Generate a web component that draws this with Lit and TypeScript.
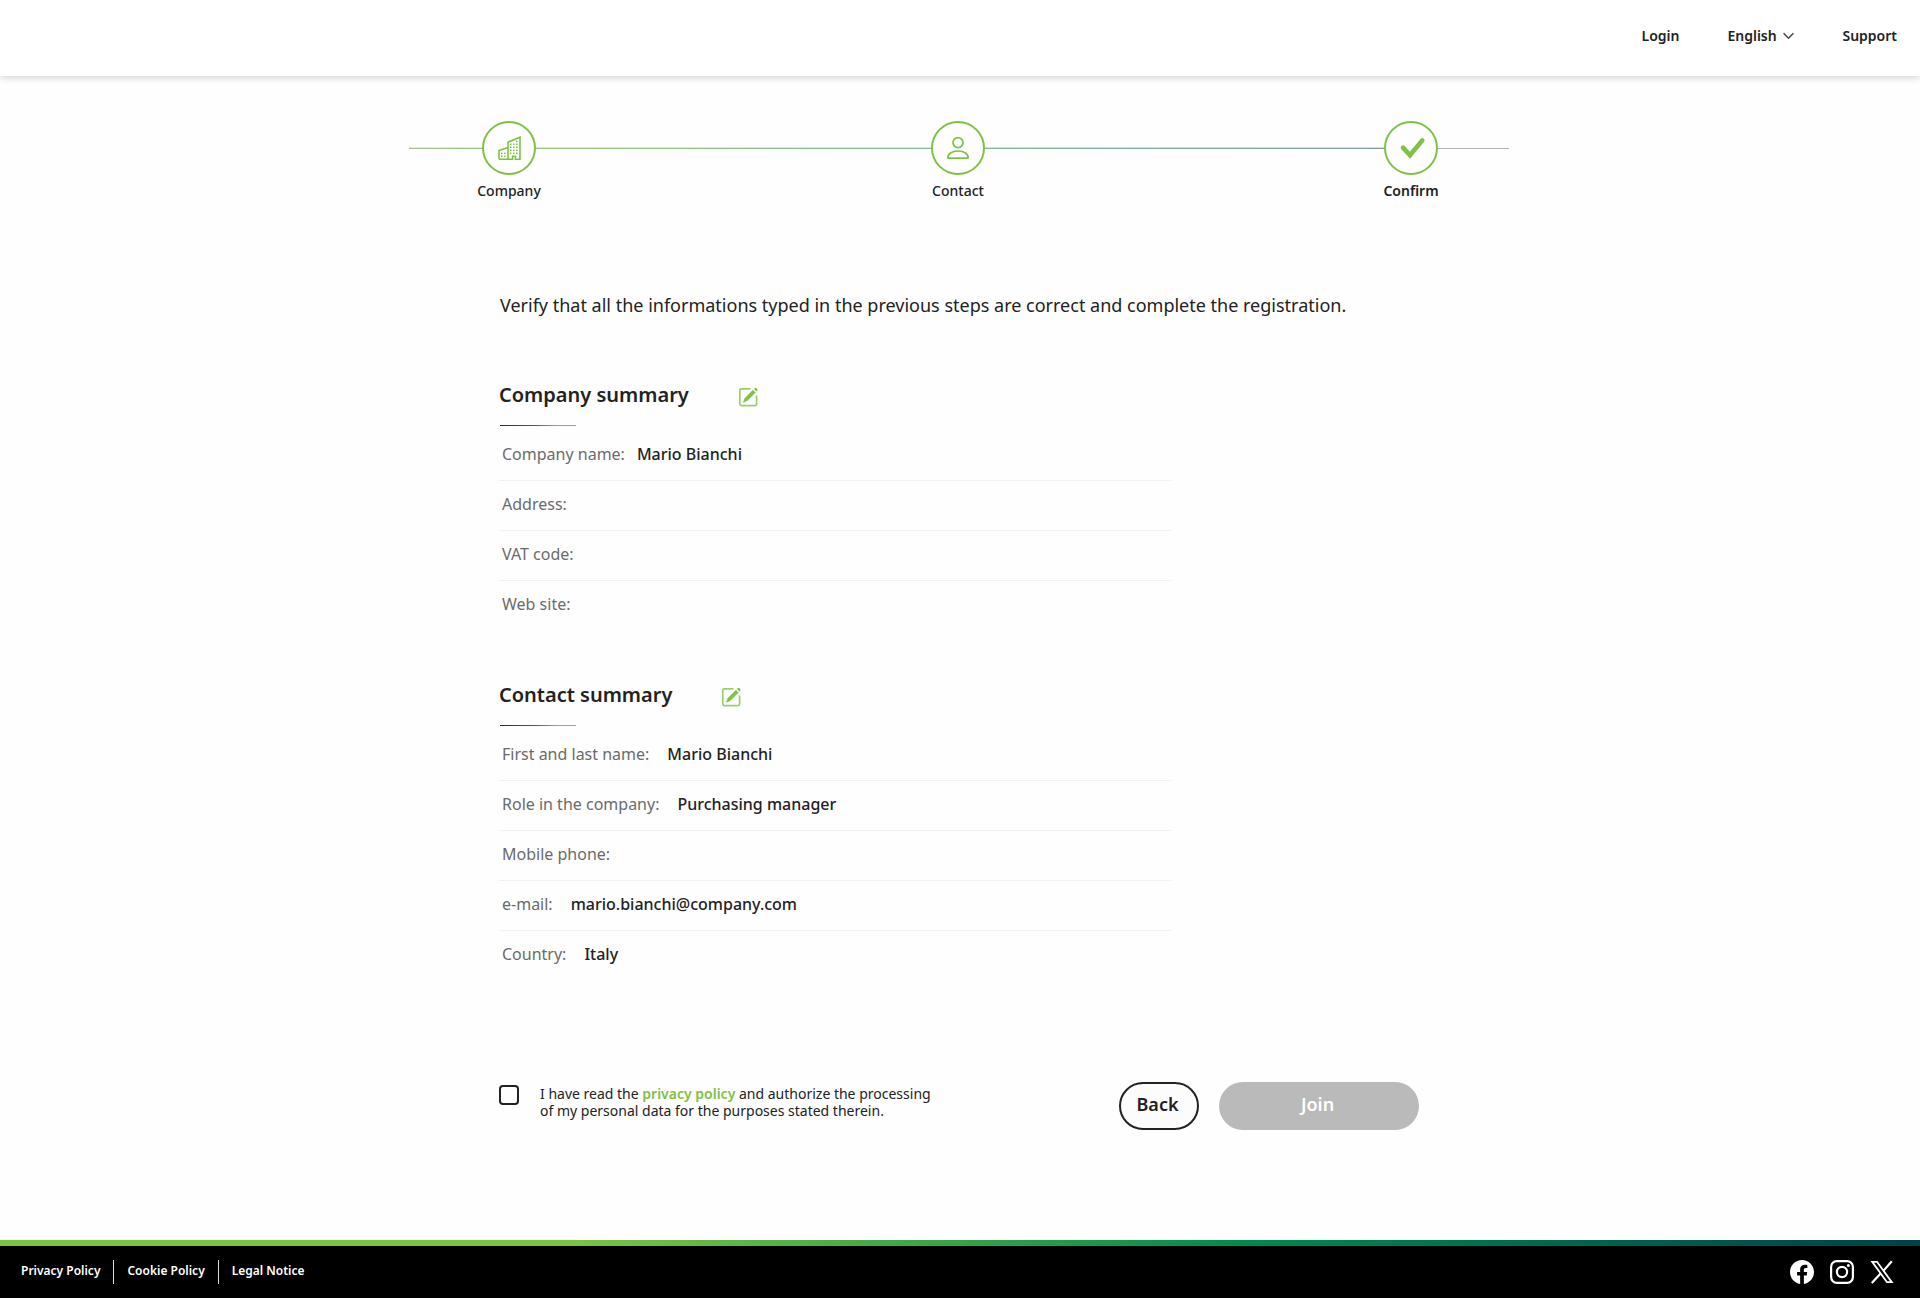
import { LitElement, html, css, svg, nothing } from "lit";
import { customElement, property, state } from "lit/decorators.js";

interface Field {
  label: string;
  value?: string;
}

const companyFields: Field[] = [
  { label: "Company name:", value: "Mario Bianchi" },
  { label: "Address:" },
  { label: "VAT code:" },
  { label: "Web site:" },
];

const contactFields: Field[] = [
  { label: "First and last name:", value: "Mario Bianchi" },
  { label: "Role in the company:", value: "Purchasing manager" },
  { label: "Mobile phone:" },
  { label: "e-mail:", value: "mario.bianchi@company.com" },
  { label: "Country:", value: "Italy" },
];

const windows = [
  [4, 16], [7, 16], [4, 19], [7, 19],
  [13, 7], [16, 7], [19, 4], [19, 7],
  [13, 10], [16, 10], [19, 10],
  [13, 13], [16, 13], [19, 13],
  [13, 16], [16, 16], [19, 16],
];

const companyIcon = svg`
  <path d="M2 23.200V14.600L11 11.600M11 23.200V6.200L23 1.200V23.200H18.400V20.200H15.600V23.200H2" fill="none" stroke="currentColor" stroke-width="1.600"/>
  ${windows.map(([x, y]) => svg`<rect x=${x} y=${y + 0.6} width="1.500" height="1.500" fill="currentColor"/>`)}
`;

const contactIcon = svg`
  <circle cx="12" cy="6.600" r="5" fill="none" stroke="currentColor" stroke-width="1.700"/>
  <path d="M1.900 22.200C1.400 17.800 6 15 12 15S22.600 17.800 22.100 22.200Z" fill="none" stroke="currentColor" stroke-width="1.700" stroke-linejoin="round"/>
`;

const confirmIcon = svg`
  <path d="M4 11.600L11 19.200L23.300 4.400" fill="none" stroke="currentColor" stroke-width="4.600" stroke-linecap="round"/>
`;

@customElement("step-progress")
export class StepProgress extends LitElement {
  static styles = css`
    :host { display: block; }
    .steps {
      display: flex;
      align-items: flex-start;
      max-width: 1100px;
      margin: 0 auto;
      padding: 0;
      list-style: none;
    }
    .line { height: 1px; margin-top: 26px; flex-basis: 0; border-top: 1px solid transparent; }
    .line-start { flex-grow: 73; background: linear-gradient(90deg, #a9bd98, #98c47a) padding-box; border-top-color: #e2efd8; }
    .line-first { flex-grow: 395; background: linear-gradient(90deg, #98c47a, #86b89a) padding-box; border-top-color: #d8eada; }
    .line-second { flex-grow: 399; background: linear-gradient(90deg, #86b89a, #809fa3) padding-box; border-top-color: #cfdfdc; }
    .line-end { flex-grow: 71; background: #b0b4b4 padding-box; }
    .step {
      width: 54px;
      display: flex;
      flex-direction: column;
      align-items: center;
      gap: 4px;
    }
    .badge {
      box-sizing: border-box;
      width: 54px;
      height: 54px;
      border: 2px solid #7dc242;
      border-radius: 50%;
      display: flex;
      align-items: center;
      justify-content: center;
      color: #7dc242;
    }
    .icon { width: 24px; height: 24px; overflow: visible; }
    .name { font-size: 14px; line-height: 24px; font-weight: 500; color: #222; }
    .current { font-weight: 600; }
  `;

  render() {
    const step = (name: string, icon: unknown, current = false) => html`
      <li class="step" aria-current=${current ? "step" : nothing}>
        <span class="badge"><svg class="icon" viewBox="0 0 24 24" aria-hidden="true">${icon}</svg></span>
        <span class="name ${current ? "current" : ""}">${name}</span>
      </li>`;
    return html`
      <ol class="steps">
        <li class="line line-start" role="presentation"></li>
        ${step("Company", companyIcon)}
        <li class="line line-first" role="presentation"></li>
        ${step("Contact", contactIcon)}
        <li class="line line-second" role="presentation"></li>
        ${step("Confirm", confirmIcon, true)}
        <li class="line line-end" role="presentation"></li>
      </ol>`;
  }
}

@customElement("summary-section")
export class SummarySection extends LitElement {
  @property() heading = "";
  @property({ attribute: false }) fields: Field[] = [];

  static styles = css`
    :host { display: block; }
    .head { display: flex; align-items: center; gap: 49px; height: 40px; }
    .title { margin: 0; font-size: 20px; line-height: 28px; font-weight: 600; color: #222; }
    .edit {
      display: flex;
      margin-top: 4px;
      padding: 0;
      border: 0;
      background: none;
      color: #7dc242;
      cursor: pointer;
    }
    .pencil { width: 22px; height: 22px; }
    .rule {
      width: 76px;
      height: 1px;
      margin: 10px 0 5px 1px;
      background: linear-gradient(90deg, #003a46, #0b7a4b 45%, #7dc242 75%);
    }
    .fields { max-width: 672px; margin: 0; }
    .row {
      box-sizing: border-box;
      display: flex;
      align-items: center;
      gap: var(--value-gap, 18px);
      height: 50px;
      padding: 0 3px 3px;
      border-bottom: 1px solid #f1f1f1;
      font-size: 16px;
      line-height: 24px;
    }
    .row:last-child { border-bottom-color: transparent; }
    .label { color: #6b6b6b; }
    .value { margin: 0; font-weight: 500; color: #222; }
  `;

  render() {
    return html`
      <section>
        <div class="head">
          <h2 class="title">${this.heading}</h2>
          <button class="edit" type="button" aria-label="Edit">
            <svg class="pencil" viewBox="0 0 22 22" aria-hidden="true">
              <path d="M12.500 2.800H3.400Q1.800 2.800 1.800 4.400V18Q1.800 19.600 3.400 19.600H17Q18.600 19.600 18.600 18V9.400" fill="none" stroke="#98cf6b" stroke-width="1.700"/>
              <path d="M14.900 4.200L17.300 6.600L9.300 14.600L5.400 16.200L7 12.200Z" fill="currentColor" stroke="currentColor" stroke-width=".6" stroke-linejoin="round"/>
              <path d="M16 3.100L17.100 2Q17.700 1.600 18.300 2.100L19.400 3.200Q19.800 3.800 19.400 4.400L18.300 5.500Z" fill="currentColor"/>
            </svg>
          </button>
        </div>
        <div class="rule"></div>
        <dl class="fields">
          ${this.fields.map(
            (f) => html`
              <div class="row">
                <dt class="label">${f.label}</dt>
                <dd class="value">${f.value ?? ""}</dd>
              </div>`
          )}
        </dl>
      </section>`;
  }
}

@customElement("app-root")
export class AppRoot extends LitElement {
  @state() private accepted = false;

  static styles = css`
    :host {
      display: block;
      font-family: "Noto Sans", sans-serif;
      color: #222;
      background: #fefefe;
    }
    .page { min-height: 100vh; display: flex; flex-direction: column; }
    .header {
      box-sizing: border-box;
      height: 76px;
      padding: 0 23px 4px 0;
      display: flex;
      align-items: center;
      justify-content: flex-end;
      gap: 48px;
      background: #fff;
      box-shadow: 0 1px 8px rgba(0, 0, 0, 0.2);
      font-size: 14px;
      line-height: 24px;
      font-weight: 600;
    }
    .nav-link { color: inherit; text-decoration: none; }
    .language { display: flex; align-items: center; gap: 6px; }
    .select {
      appearance: none;
      border: 0;
      padding: 0;
      background: none;
      font: inherit;
      color: inherit;
    }
    .chevron { width: 11px; height: 8px; }
    .main { flex: 1; padding: 45px 25px 0 23px; }
    .content { max-width: 920px; margin: 0 auto; }
    .intro { margin: 88px 0 0 1px; font-size: 18px; line-height: 28px; }
    .company { margin-top: 56px; --value-gap: 12px; }
    .contact { margin-top: 44px; }
    .actions {
      margin-top: 101px;
      display: flex;
      align-items: flex-start;
      gap: 20px;
    }
    .consent { flex: 1; display: flex; align-items: flex-start; gap: 21px; padding-top: 3px; }
    .check {
      appearance: none;
      box-sizing: border-box;
      width: 20px;
      height: 20px;
      margin: 0;
      border: 2px solid #222;
      border-radius: 4px;
    }
    .check:checked { background: #7dc242; }
    .terms { font-size: 14px; line-height: 17px; }
    .policy { color: #7dc242; font-weight: 600; text-decoration: none; }
    .button {
      box-sizing: border-box;
      height: 48px;
      padding: 0 3px 4px 0;
      border-radius: 24px;
      font-family: inherit;
      font-size: 18px;
      line-height: 24px;
      font-weight: 600;
    }
    .back { width: 80px; border: 2px solid #222; background: #fcfcfc; color: #222; }
    .join { width: 200px; border: 0; background: #bababa; color: #fff; }
    .stripe {
      height: 6px;
      background: linear-gradient(90deg, #7dc242 30%, #00894f 65%, #00404a);
    }
    .footer {
      box-sizing: border-box;
      height: 52px;
      padding: 0 26px 0 21px;
      display: flex;
      align-items: center;
      justify-content: space-between;
      background: #000;
      color: #fff;
    }
    .legal { display: flex; align-items: center; font-size: 12px; line-height: 20px; font-weight: 600; }
    .legal-link { color: inherit; text-decoration: none; padding-bottom: 3px; }
    .divider { width: 1px; height: 24px; margin: 0 13px; background: #ddd; }
    .social { display: flex; gap: 16px; }
    .social-link { display: flex; color: #fff; }
    .logo { width: 24px; height: 24px; }
  `;

  render() {
    return html`
      <div class="page">
        <header class="header">
          <a class="nav-link" href="#login">Login</a>
          <div class="language">
            <select class="select" aria-label="Language">
              <option>English</option>
            </select>
            <svg class="chevron" viewBox="0 0 11 8" aria-hidden="true">
              <path d="M.6 1.300L5.500 6.300L10.400 1.300" fill="none" stroke="#444" stroke-width="1.500"/>
            </svg>
          </div>
          <a class="nav-link" href="#support">Support</a>
        </header>

        <main class="main">
          <step-progress></step-progress>
          <div class="content">
            <p class="intro">Verify that all the informations typed in the previous steps are correct and complete the registration.</p>
            <summary-section class="company" heading="Company summary" .fields=${companyFields}></summary-section>
            <summary-section class="contact" heading="Contact summary" .fields=${contactFields}></summary-section>
            <form class="actions" @submit=${(e: Event) => e.preventDefault()}>
              <div class="consent">
                <input
                  class="check"
                  id="consent"
                  type="checkbox"
                  .checked=${this.accepted}
                  @change=${(e: Event) => (this.accepted = (e.target as HTMLInputElement).checked)}
                />
                <label class="terms" for="consent">
                  I have read the <a class="policy" href="#privacy">privacy policy</a> and authorize the processing<br />
                  of my personal data for the purposes stated therein.
                </label>
              </div>
              <button class="button back" type="button">Back</button>
              <button class="button join" type="submit" ?disabled=${!this.accepted}>Join</button>
            </form>
          </div>
        </main>

        <div class="stripe"></div>
        <footer class="footer">
          <nav class="legal">
            <a class="legal-link" href="#privacy">Privacy Policy</a>
            <span class="divider"></span>
            <a class="legal-link" href="#cookie">Cookie Policy</a>
            <span class="divider"></span>
            <a class="legal-link" href="#legal">Legal Notice</a>
          </nav>
          <div class="social">
            <a class="social-link" href="#facebook" aria-label="Facebook">
              <svg class="logo" viewBox="0 0 24 24" fill="currentColor" aria-hidden="true">
                <path d="M24 12.070C24 5.400 18.630 0 12 0S0 5.400 0 12.070C0 18.100 4.390 23.090 10.130 24V15.560H7.080V12.070H10.130V9.410C10.130 6.390 11.920 4.720 14.660 4.720C15.970 4.720 17.340 4.950 17.340 4.950V7.920H15.830C14.340 7.920 13.870 8.850 13.870 9.800V12.070H17.200L16.670 15.560H13.870V24C19.610 23.090 24 18.100 24 12.070Z"/>
              </svg>
            </a>
            <a class="social-link" href="#instagram" aria-label="Instagram">
              <svg class="logo" viewBox="0 0 24 24" fill="none" stroke="currentColor" stroke-width="2.200" aria-hidden="true">
                <rect x="1.100" y="1.100" width="21.800" height="21.800" rx="5.800"/>
                <circle cx="12" cy="12" r="5.100"/>
                <circle cx="18.400" cy="5.600" r="1.500" fill="currentColor" stroke="none"/>
              </svg>
            </a>
            <a class="social-link" href="#x" aria-label="X">
              <svg class="logo" viewBox="0 0 24 24" fill="none" stroke="currentColor" aria-hidden="true">
                <path d="M2.200 1.800H7L21.800 22.200H17Z" stroke-width="1.800"/>
                <path d="M21.800 1.200L13.600 10.600M10.600 13.600L1.800 22.900" stroke-width="2.200"/>
              </svg>
            </a>
          </div>
        </footer>
      </div>`;
  }
}
